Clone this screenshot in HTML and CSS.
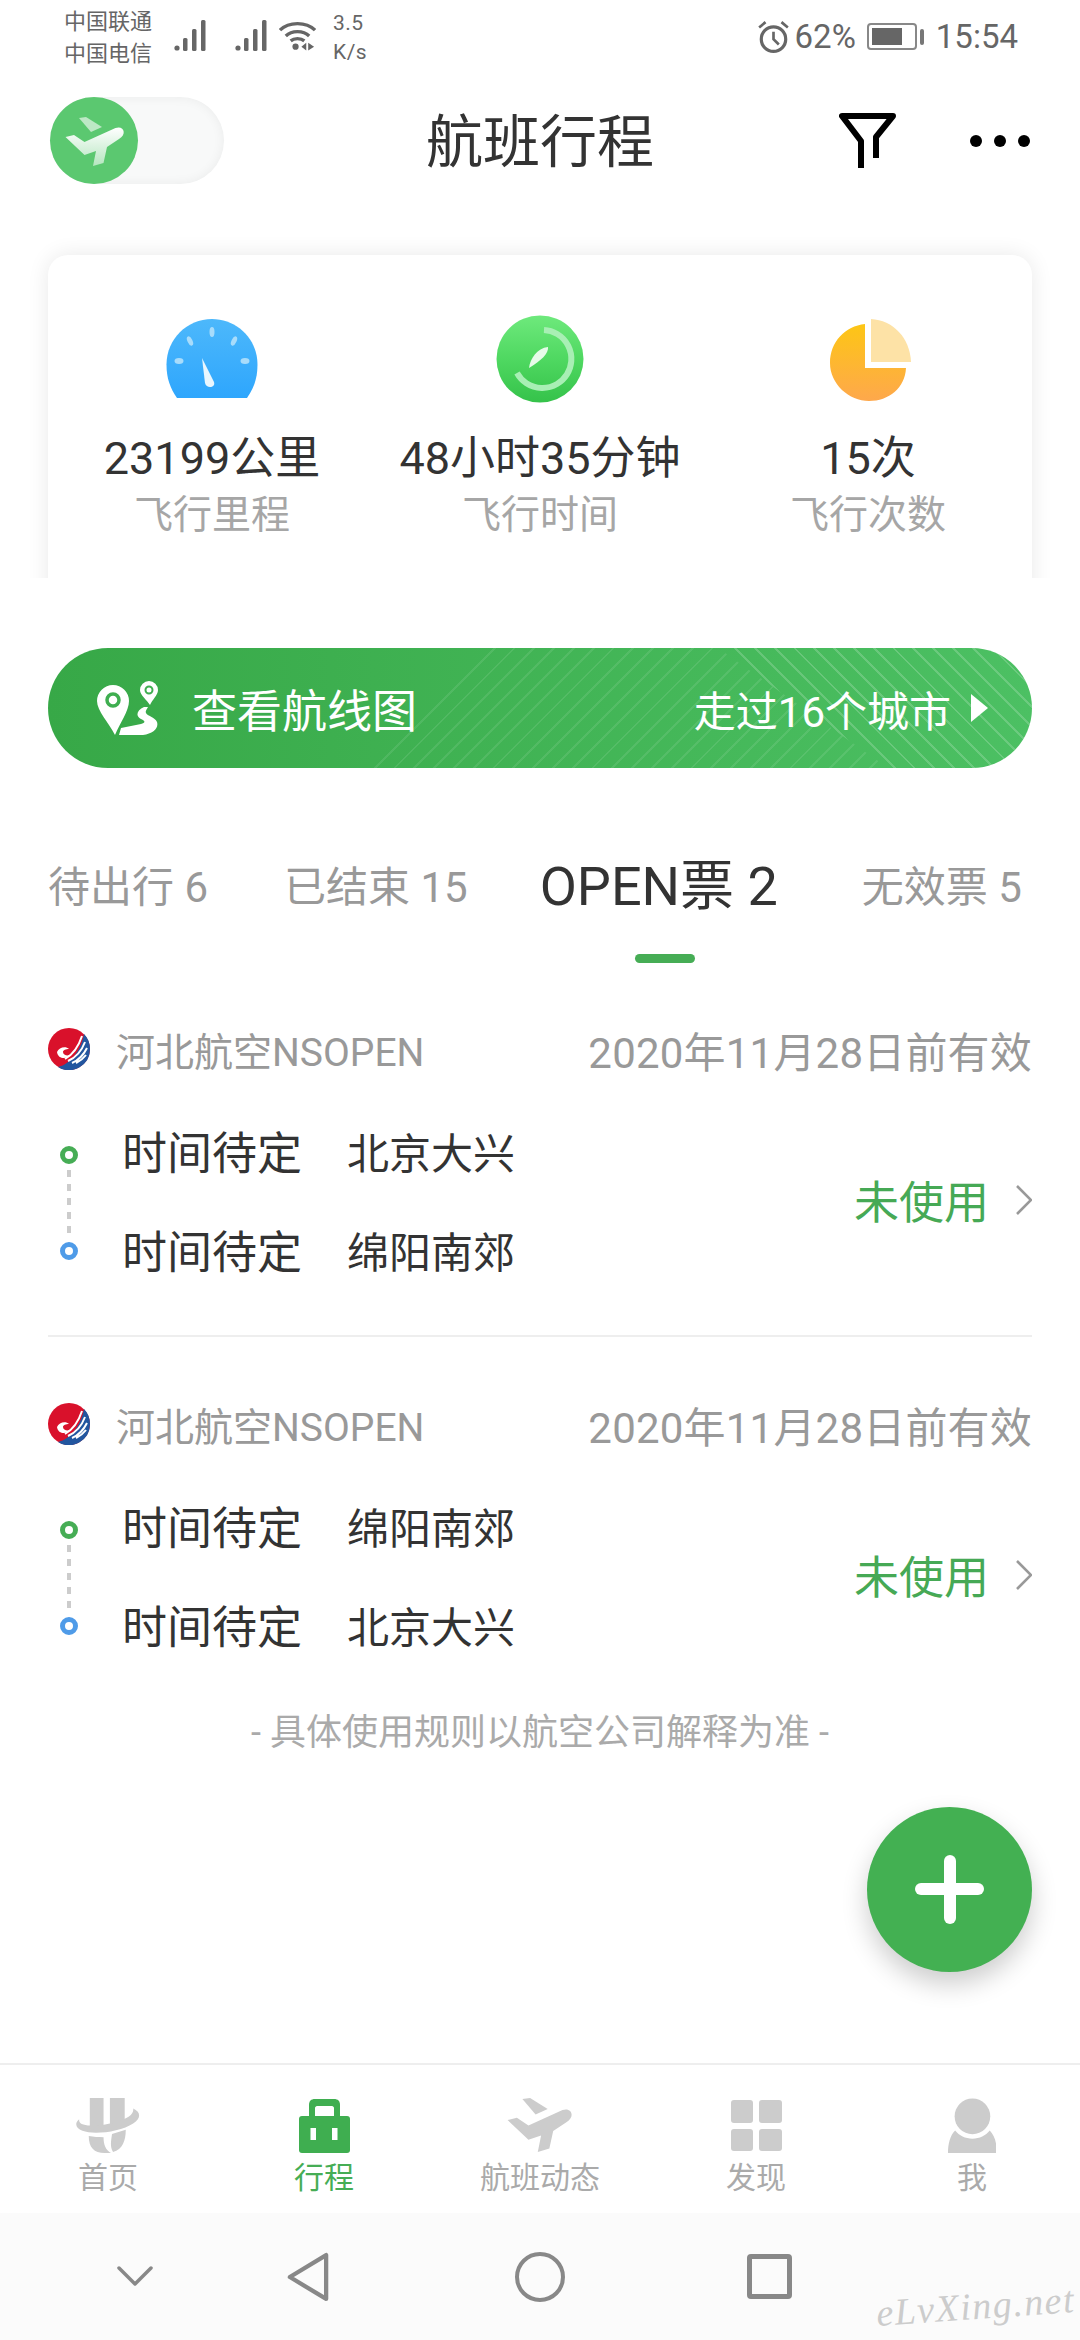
FILE: index.html
```html
<!DOCTYPE html>
<html>
<head>
    <title>航班行程</title>
    <link rel="stylesheet" href="styles.css">
</head>
<body>
    <div class="phone">
        <div class="status-bar">
            <div class="carriers"><span>中国联通</span><span>中国电信</span></div>
            <svg class="signal" viewBox="0 0 34 32"><circle cx="3" cy="28" r="2.600"/><rect x="9" y="18" width="4.500" height="13" rx="1.500"/><rect x="18" y="9" width="4.500" height="22" rx="1.500"/><rect x="27" y="0" width="4.500" height="31" rx="1.500"/></svg>
            <svg class="signal second" viewBox="0 0 34 32"><circle cx="3" cy="28" r="2.600"/><rect x="9" y="18" width="4.500" height="13" rx="1.500"/><rect x="18" y="9" width="4.500" height="22" rx="1.500"/><rect x="27" y="0" width="4.500" height="31" rx="1.500"/></svg>
            <svg class="wifi" viewBox="0 0 38 32">
                <path d="M1 10C10 1 28 1 37 10M7 16C13 10 25 10 31 16M12 21C15.500 18 22.500 18 26 21" fill="none" stroke="#666" stroke-width="3.400"/>
                <circle cx="17" cy="27" r="3.200" fill="#666"/>
                <path d="M28 23v8l-5-4zM30 23v8l6-4z" fill="#666"/>
            </svg>
            <div class="speed"><span>3.5</span><span>K/s</span></div>
            <div class="status-right">
                <svg class="alarm" viewBox="0 0 29 32">
                    <circle cx="14.500" cy="18" r="11.500" fill="none" stroke="#666" stroke-width="3"/>
                    <path d="M14.500 11v7l5 5" fill="none" stroke="#666" stroke-width="2.500"/>
                    <path d="M1 7l6-5M28 7l-6-5" fill="none" stroke="#666" stroke-width="2.500"/>
                </svg>
                <span class="battery-text">62%</span>
                <div class="battery"><div class="battery-fill"></div></div>
                <div class="battery-tip"></div>
                <span class="clock">15:54</span>
            </div>
        </div>

        <header class="top-bar">
            <div class="toggle">
                <div class="toggle-knob">
                    <svg viewBox="0 0 88 88" width="88" height="88">
                        <defs><linearGradient id="plane" x1="0" y1="0" x2="0" y2="1"><stop offset="0" stop-color="#fff"/><stop offset="1" stop-color="#b5e6bf"/></linearGradient></defs>
                        <path d="M29 21l7-1 16 10-11 5z" fill="#bde8c5"/>
                        <path d="M15.500 40l8.500-2 10.500 7 31-14c8-3 12 6 3.500 11L57 50l-3.500 16L43 69l3-15-11.500 4z" fill="url(#plane)"/>
                    </svg>
                </div>
            </div>
            <h1 class="page-title">航班行程</h1>
            <div class="top-actions">
                <svg class="filter" viewBox="0 0 57 55"><path d="M22 55V28L3 3h51L37 24v21" fill="none" stroke="#000" stroke-width="6" stroke-linejoin="round"/></svg>
                <div class="dots"><i></i><i></i><i></i></div>
            </div>
        </header>

        <section class="stats-wrap">
            <div class="stats-card">
                <div class="stat">
                    <svg class="stat-icon" viewBox="0 0 92 92">
                        <defs><linearGradient id="blue" x1="0" y1="0" x2="0" y2="1"><stop offset="0" stop-color="#4db8fb"/><stop offset="1" stop-color="#2ea6fd"/></linearGradient></defs>
                        <path d="M11 85C4 75 .500 65 .500 51.500 .500 26 21 6 46 6s45.500 20 45.500 45.500C91.500 65 88 75 81 85z" fill="url(#blue)"/>
                        <g fill="#a8dcfb"><ellipse cx="46" cy="19" rx="2.500" ry="5"/><ellipse cx="24" cy="28" rx="2.500" ry="5" transform="rotate(-25 24 28)"/><ellipse cx="68" cy="28" rx="2.500" ry="5" transform="rotate(25 68 28)"/><ellipse cx="13" cy="48" rx="4.500" ry="3"/><ellipse cx="79" cy="48" rx="4.500" ry="3"/></g>
                        <path d="M36 45l12 24c2 6-8 7-9 1z" fill="#e9f6fe"/>
                    </svg>
                    <div class="stat-value">23199公里</div>
                    <div class="stat-label">飞行里程</div>
                </div>
                <div class="stat">
                    <svg class="stat-icon" viewBox="0 0 92 92">
                        <defs><linearGradient id="green" x1="0" y1="0" x2="0" y2="1"><stop offset="0" stop-color="#6ee97c"/><stop offset=".5" stop-color="#4fd861"/><stop offset="1" stop-color="#35c24a"/></linearGradient></defs>
                        <circle cx="46" cy="46" r="43.500" fill="url(#green)"/>
                        <path d="M50 17A29 29 0 1 1 23 60" fill="none" stroke="#a8efb4" stroke-width="6"/>
                        <path d="M54 34c1 6-7 14-19 21 1-9 8-20 19-21z" fill="#e6fbe9"/>
                    </svg>
                    <div class="stat-value">48小时35分钟</div>
                    <div class="stat-label">飞行时间</div>
                </div>
                <div class="stat">
                    <svg class="stat-icon" viewBox="0 0 92 92">
                        <defs><linearGradient id="orange" x1="0" y1="0" x2="0" y2="1"><stop offset="0" stop-color="#fdc615"/><stop offset="1" stop-color="#fea84c"/></linearGradient></defs>
                        <path d="M43 11v44h41c-1 20-17 33-37 33C27 88 8 71 8 50 8 29 23 13 43 11z" fill="url(#orange)"/>
                        <path d="M49 6c22 1 39 19 40 43H49z" fill="#fde2a6"/>
                    </svg>
                    <div class="stat-value">15次</div>
                    <div class="stat-label">飞行次数</div>
                </div>
            </div>
        </section>

        <a class="route-banner">
            <svg class="route-icon" viewBox="0 0 61 54">
                <path d="M16 4a16 16 0 0 1 16 16c0 10-9 22-14 34C12 42 0 30 0 20A16 16 0 0 1 16 4z" fill="#fff"/>
                <circle cx="16" cy="19" r="6" fill="#fff" stroke="#3fae50" stroke-width="3.500"/>
                <path d="M52 0a9 9 0 0 1 9 9c0 5-6 10-8 15-3-5-10-10-10-15a9 9 0 0 1 9-9z" fill="#fff"/>
                <circle cx="52" cy="9" r="3.500" fill="#fff" stroke="#3fae50" stroke-width="2"/>
                <path d="M47 26c-7 3-9 9-3 12 5 2 4 4 0 5L24 47l-2 7h24c10-1 16-7 14-13-2-5-10-6-11-9-1-2 1-4 2-6z" fill="#fff"/>
            </svg>
            <span class="route-title">查看航线图</span>
            <span class="route-count">走过16个城市</span>
            <span class="route-arrow"></span>
        </a>

        <nav class="tabs">
            <span class="tab">待出行 6</span>
            <span class="tab">已结束 15</span>
            <span class="tab active">OPEN票 2</span>
            <span class="tab">无效票 5</span>
        </nav>

        <div class="ticket">
            <div class="ticket-head">
                <svg class="airline-logo" viewBox="0 0 42 42">
                    <circle cx="21" cy="21" r="21" fill="#d9112b"/>
                    <path d="M36 6c4 4 6 9 6 15a21 21 0 0 1-32 18c13-3 23-17 26-33z" fill="#22569f"/>
                    <path d="M34 8C31 17 26 26 17 31M37 14C34 22 29 29 20 33M39 20C36 26 31 32 24 35M38 27C35 31 32 33 28 35" fill="none" stroke="#fff" stroke-width="2"/>
                    <path d="M9 24c2-5 9-6 12-3-3 0-6 1-6 3 0 3 4 4 7 3-2 4-12 5-13-3z" fill="#fff"/>
                </svg>
                <span class="airline">河北航空NSOPEN</span>
                <span class="valid">2020年11月28日前有效</span>
            </div>
            <div class="ticket-body">
                <div class="route-line"><i class="dot dep"></i><i class="dash"></i><i class="dot arr"></i></div>
                <div class="legs">
                    <div class="leg"><span class="leg-time">时间待定</span><span class="leg-place">北京大兴</span></div>
                    <div class="leg"><span class="leg-time">时间待定</span><span class="leg-place">绵阳南郊</span></div>
                </div>
                <span class="ticket-state">未使用</span>
                <svg class="chevron" viewBox="0 0 20 32"><path d="M5 2l14 14L5 30" fill="none" stroke="#999" stroke-width="2.600"/></svg>
            </div>
        </div>

        <div class="ticket last">
            <div class="ticket-head">
                <svg class="airline-logo" viewBox="0 0 42 42">
                    <circle cx="21" cy="21" r="21" fill="#d9112b"/>
                    <path d="M36 6c4 4 6 9 6 15a21 21 0 0 1-32 18c13-3 23-17 26-33z" fill="#22569f"/>
                    <path d="M34 8C31 17 26 26 17 31M37 14C34 22 29 29 20 33M39 20C36 26 31 32 24 35M38 27C35 31 32 33 28 35" fill="none" stroke="#fff" stroke-width="2"/>
                    <path d="M9 24c2-5 9-6 12-3-3 0-6 1-6 3 0 3 4 4 7 3-2 4-12 5-13-3z" fill="#fff"/>
                </svg>
                <span class="airline">河北航空NSOPEN</span>
                <span class="valid">2020年11月28日前有效</span>
            </div>
            <div class="ticket-body">
                <div class="route-line"><i class="dot dep"></i><i class="dash"></i><i class="dot arr"></i></div>
                <div class="legs">
                    <div class="leg"><span class="leg-time">时间待定</span><span class="leg-place">绵阳南郊</span></div>
                    <div class="leg"><span class="leg-time">时间待定</span><span class="leg-place">北京大兴</span></div>
                </div>
                <span class="ticket-state">未使用</span>
                <svg class="chevron" viewBox="0 0 20 32"><path d="M5 2l14 14L5 30" fill="none" stroke="#999" stroke-width="2.600"/></svg>
            </div>
        </div>

        <p class="rule-note">- 具体使用规则以航空公司解释为准 -</p>

        <button class="fab"><i class="fab-h"></i><i class="fab-v"></i></button>

        <footer class="bottom">
            <div class="tabbar">
                <div class="tabbar-item">
                    <svg class="tabbar-icon" viewBox="0 0 62 52">
                        <path d="M14 0h13v30c-6 0-10-.500-13-1zM33 0h14v22c-4 3-8 5-14 7z" fill="#ccc"/>
                        <path d="M55 10c7 3 8 9 0 14-12 8-37 11-48 7-6-2-8-7-3-11-1 5 6 6 13 6 14 0 40-6 38-16z" fill="#ccc"/>
                        <path d="M13 36c5 1 9 1 14 1 0 7 2 12 7 15h-6c-10 0-15-5-15-16zM35 34l13-4c0 10-3 19-12 21-3-5-2-10-1-17z" fill="#ccc"/>
                    </svg>
                    <span class="tabbar-label">首页</span>
                </div>
                <div class="tabbar-item current">
                    <svg class="tabbar-icon" viewBox="0 0 51 55">
                        <path d="M10 18V7c0-4 2-6 6-6h19c4 0 6 2 6 6v11h-6v-8c0-1-1-2-2-2H18c-1 0-2 1-2 2v8z" fill="#3fae50"/>
                        <rect y="18" width="51" height="37" rx="3" fill="#3fae50"/>
                        <rect x="11.500" y="30" width="5.500" height="12" fill="#fff"/>
                        <rect x="33" y="30" width="5.500" height="12" fill="#fff"/>
                    </svg>
                    <span class="tabbar-label">行程</span>
                </div>
                <div class="tabbar-item">
                    <svg class="tabbar-icon" viewBox="15 20 60 50">
                        <path d="M29 21l7-1 16 10-11 5z" fill="#ccc"/>
                        <path d="M15.500 40l8.500-2 10.500 7 31-14c8-3 12 6 3.500 11L57 50l-3.500 16L43 69l3-15-11.500 4z" fill="#ccc"/>
                    </svg>
                    <span class="tabbar-label">航班动态</span>
                </div>
                <div class="tabbar-item">
                    <div class="grid-icon"><i></i><i></i><i></i><i></i></div>
                    <span class="tabbar-label">发现</span>
                </div>
                <div class="tabbar-item">
                    <svg class="tabbar-icon" viewBox="0 0 48 54">
                        <circle cx="24" cy="18" r="17.500" fill="#ccc"/>
                        <path d="M0 54c0-9 2-17 7-22 4 5 10 8 17 8s13-3 17-8c5 5 7 13 7 22z" fill="#ccc"/>
                    </svg>
                    <span class="tabbar-label">我</span>
                </div>
            </div>
            <div class="nav-bar">
                <svg class="nav-down" viewBox="0 0 36 22"><path d="M2 2l16 16L34 2" fill="none" stroke="#888" stroke-width="3.500" stroke-linecap="round" stroke-linejoin="round"/></svg>
                <svg class="nav-back" viewBox="0 0 44 52"><path d="M41 3v46L3 26z" fill="none" stroke="#888" stroke-width="4.500" stroke-linejoin="round"/></svg>
                <div class="nav-home"></div>
                <div class="nav-recent"></div>
            </div>
        </footer>
        <span class="watermark">eLvXing.net</span>
    </div>
</body>
</html>
```

FILE: styles.css
```css
* {
    box-sizing: border-box;
}
html, body {
    margin: 0;
    padding: 0;
    background: #fff;
}
i {
    display: block;
}
.phone {
    position: relative;
    width: 1080px;
    height: 2340px;
    overflow: hidden;
    display: flex;
    flex-direction: column;
    font-family: "Roboto", "Noto Sans CJK SC", sans-serif;
    color: #333;
}

/* status bar */
.status-bar {
    height: 72px;
    padding: 4px 62px 0 64px;
    display: flex;
    align-items: center;
    color: #666;
    flex-shrink: 0;
}
.carriers, .speed {
    display: flex;
    flex-direction: column;
    font-size: 22px;
    line-height: 32px;
}
.speed {
    font-size: 21px;
    line-height: 29px;
    margin-left: 17px;
    letter-spacing: .5px;
}
.signal {
    width: 34px;
    height: 32px;
    margin: -4px 0 0 22px;
    fill: #666;
}
.signal.second {
    margin-left: 27px;
}
.wifi {
    width: 37px;
    height: 32px;
    margin: -4px 0 0 10px;
}
.status-right {
    margin-left: auto;
    display: flex;
    align-items: center;
    margin-top: -3px;
}
.alarm {
    width: 31px;
    height: 34px;
    margin-right: 6px;
}
.battery-text {
    font-size: 33px;
}
.battery {
    width: 50px;
    height: 27px;
    margin-left: 11px;
    border: 2px solid #888;
    border-radius: 4px;
    padding: 3px;
}
.battery-fill {
    width: 30px;
    height: 100%;
    background: #666;
}
.battery-tip {
    width: 4px;
    height: 16px;
    margin-left: 3px;
    background: #777;
    border-radius: 2px;
}
.clock {
    font-size: 33px;
    margin-left: 12px;
}

/* title row */
.top-bar {
    height: 142px;
    position: relative;
    flex-shrink: 0;
    display: flex;
    align-items: center;
    justify-content: center;
}
.toggle {
    position: absolute;
    left: 50px;
    top: 25px;
    width: 174px;
    height: 87px;
    border-radius: 44px;
    background: #f8f9f9;
    box-shadow: inset 0 0 12px rgba(0, 0, 0, .06);
}
.toggle-knob {
    width: 88px;
    height: 87px;
    border-radius: 50%;
    background: #5bc870;
}
.page-title {
    margin: 0;
    font-size: 57px;
    font-weight: 400;
    line-height: 70px;
    color: #333;
}
.top-actions {
    position: absolute;
    right: 50px;
    top: 41px;
    display: flex;
    align-items: center;
}
.filter {
    width: 57px;
    height: 55px;
    margin-right: 74px;
}
.dots {
    display: flex;
    gap: 12px;
}
.dots i {
    width: 12px;
    height: 12px;
    border-radius: 50%;
    background: #000;
}

/* summary card */
.stats-wrap {
    height: 364px;
    padding: 41px 48px 0;
    overflow: hidden;
    flex-shrink: 0;
}
.stats-card {
    height: 360px;
    display: flex;
    background: #fff;
    border-radius: 20px;
    box-shadow: 0 0 22px rgba(0, 0, 0, .09);
}
.stat {
    width: 328px;
    display: flex;
    flex-direction: column;
    align-items: center;
}
.stat-icon {
    width: 92px;
    height: 92px;
    margin-top: 58px;
}
.stat-value {
    margin-top: 26px;
    font-size: 45px;
    line-height: 56px;
    color: #333;
}
.stat-label {
    margin-top: 3px;
    font-size: 39px;
    line-height: 50px;
    color: #a6a6a6;
}

/* route banner */
.route-banner {
    position: relative;
    overflow: hidden;
    margin: 70px 48px 0;
    height: 120px;
    flex-shrink: 0;
    border-radius: 60px;
    display: flex;
    align-items: center;
    padding: 0 44px 0 49px;
    color: #fff;
    background: linear-gradient(90deg, #37a847, #4cc063);
}
.route-banner::before, .route-banner::after {
    content: "";
    position: absolute;
    top: 0;
    height: 120px;
}
.route-banner::before {
    left: 310px;
    width: 530px;
    background: repeating-linear-gradient(-45deg, transparent 0 12px, rgba(255, 255, 255, .09) 12px 14px);
    clip-path: polygon(0 100%, 130px 0, 360px 0, 530px 100%);
}
.route-banner::after {
    left: 670px;
    width: 314px;
    background: repeating-linear-gradient(45deg, transparent 0 12px, rgba(255, 255, 255, .18) 12px 14px);
    clip-path: polygon(0 0, 100% 0, 100% 100%, 170px 100%);
}
.route-banner > * {
    position: relative;
    z-index: 1;
}
.route-icon {
    width: 61px;
    height: 54px;
}
.route-title {
    margin-left: 34px;
    font-size: 45px;
}
.route-count {
    margin-left: auto;
    font-size: 42px;
}
.route-arrow {
    margin-left: 20px;
    width: 0;
    height: 0;
    border-left: 17px solid #fff;
    border-top: 14px solid transparent;
    border-bottom: 14px solid transparent;
}

/* tabs */
.tabs {
    height: 132px;
    margin: 62px 48px 0;
    flex-shrink: 0;
    display: flex;
    align-items: flex-start;
}
.tab {
    position: relative;
    font-size: 42px;
    line-height: 50px;
    margin-top: 33px;
    color: #999;
}
.tab + .tab {
    margin-left: 76px;
}
.tab.active {
    font-size: 54px;
    line-height: 70px;
    margin-top: 22px;
    margin-left: 72px;
    color: #333;
}
.tab.active + .tab {
    margin-left: 84px;
}
.tab.active::after {
    content: "";
    position: absolute;
    left: 50%;
    bottom: -41px;
    width: 60px;
    height: 9px;
    margin-left: -24px;
    border-radius: 5px;
    background: #46ad55;
}

/* tickets */
.ticket {
    margin: 0 48px;
    padding-top: 57px;
    height: 375px;
    border-bottom: 2px solid #eee;
    flex-shrink: 0;
}
.ticket.last {
    border-bottom: 0;
    height: 371px;
}
.ticket-head {
    display: flex;
    align-items: center;
    height: 60px;
}
.airline-logo {
    width: 42px;
    height: 42px;
}
.airline {
    margin-left: 26px;
    font-size: 39px;
    color: #999;
}
.valid {
    margin-left: auto;
    font-size: 42px;
    letter-spacing: .2px;
    color: #999;
}
.ticket-body {
    display: flex;
    align-items: center;
    margin-top: 36px;
}
.route-line {
    width: 18px;
    margin: 6px 0 0 12px;
    display: flex;
    flex-direction: column;
    align-items: center;
}
.dot {
    width: 18px;
    height: 18px;
    border-radius: 50%;
    border: 5px solid #46ad55;
}
.dot.arr {
    border-color: #4f9be8;
}
.dash {
    height: 68px;
    width: 4px;
    margin: 6px 0 4px;
    background: repeating-linear-gradient(#ccc 0 7px, transparent 7px 14px);
}
.legs {
    margin-left: 44px;
    display: flex;
    flex-direction: column;
    gap: 29px;
}
.leg {
    display: flex;
    align-items: center;
    height: 70px;
}
.leg-time {
    font-size: 45px;
    width: 225px;
}
.leg-place {
    font-size: 42px;
}
.ticket-state {
    margin-left: auto;
    font-size: 45px;
    color: #46a955;
}
.chevron {
    width: 20px;
    height: 32px;
    margin-left: 23px;
}

.rule-note {
    margin: 0;
    text-align: center;
    font-size: 36px;
    line-height: 50px;
    color: #aaa;
}

/* add button */
.fab {
    position: absolute;
    left: 867px;
    top: 1807px;
    width: 165px;
    height: 165px;
    padding: 0;
    border: 0;
    border-radius: 50%;
    background: #43b052;
    box-shadow: 0 12px 26px rgba(0, 0, 0, .2);
}
.fab-h, .fab-v {
    position: absolute;
    background: #fff;
    border-radius: 6px;
}
.fab-h {
    left: 48px;
    top: 76px;
    width: 69px;
    height: 12px;
}
.fab-v {
    left: 77px;
    top: 48px;
    width: 12px;
    height: 69px;
}

/* bottom */
.bottom {
    margin-top: auto;
    border-top: 2px solid #eee;
    flex-shrink: 0;
}
.tabbar {
    height: 148px;
    display: flex;
    padding-top: 33px;
    background: #fff;
}
.tabbar-item {
    width: 216px;
    display: flex;
    flex-direction: column;
    align-items: center;
}
.tabbar-icon {
    height: 55px;
    width: auto;
}
.tabbar-label {
    margin-top: 7px;
    font-size: 30px;
    line-height: 36px;
    color: #aaa;
}
.current .tabbar-label {
    color: #46ad55;
}
.grid-icon {
    width: 51px;
    height: 51px;
    margin: 2px 0;
    display: grid;
    grid-template-columns: 1fr 1fr;
    gap: 6px;
}
.grid-icon i {
    background: #ccc;
    border-radius: 3px;
}
.nav-bar {
    height: 127px;
    background: #fbfbfb;
    display: flex;
    align-items: center;
    padding-left: 117px;
}
.nav-down {
    width: 36px;
    height: 22px;
}
.nav-back {
    width: 42px;
    height: 50px;
    margin-left: 134px;
}
.nav-home {
    width: 50px;
    height: 50px;
    border-radius: 50%;
    border: 4.500px solid #888;
    margin-left: 186px;
}
.nav-recent {
    width: 45px;
    height: 45px;
    border-radius: 4px;
    border: 5px solid #888;
    margin-left: 182px;
}
.watermark {
    position: absolute;
    left: 876px;
    top: 2284px;
    font-family: "Liberation Serif", serif;
    font-style: italic;
    font-size: 38px;
    line-height: 44px;
    letter-spacing: 1.500px;
    color: #ccc;
    transform: rotate(-4deg);
}
```
